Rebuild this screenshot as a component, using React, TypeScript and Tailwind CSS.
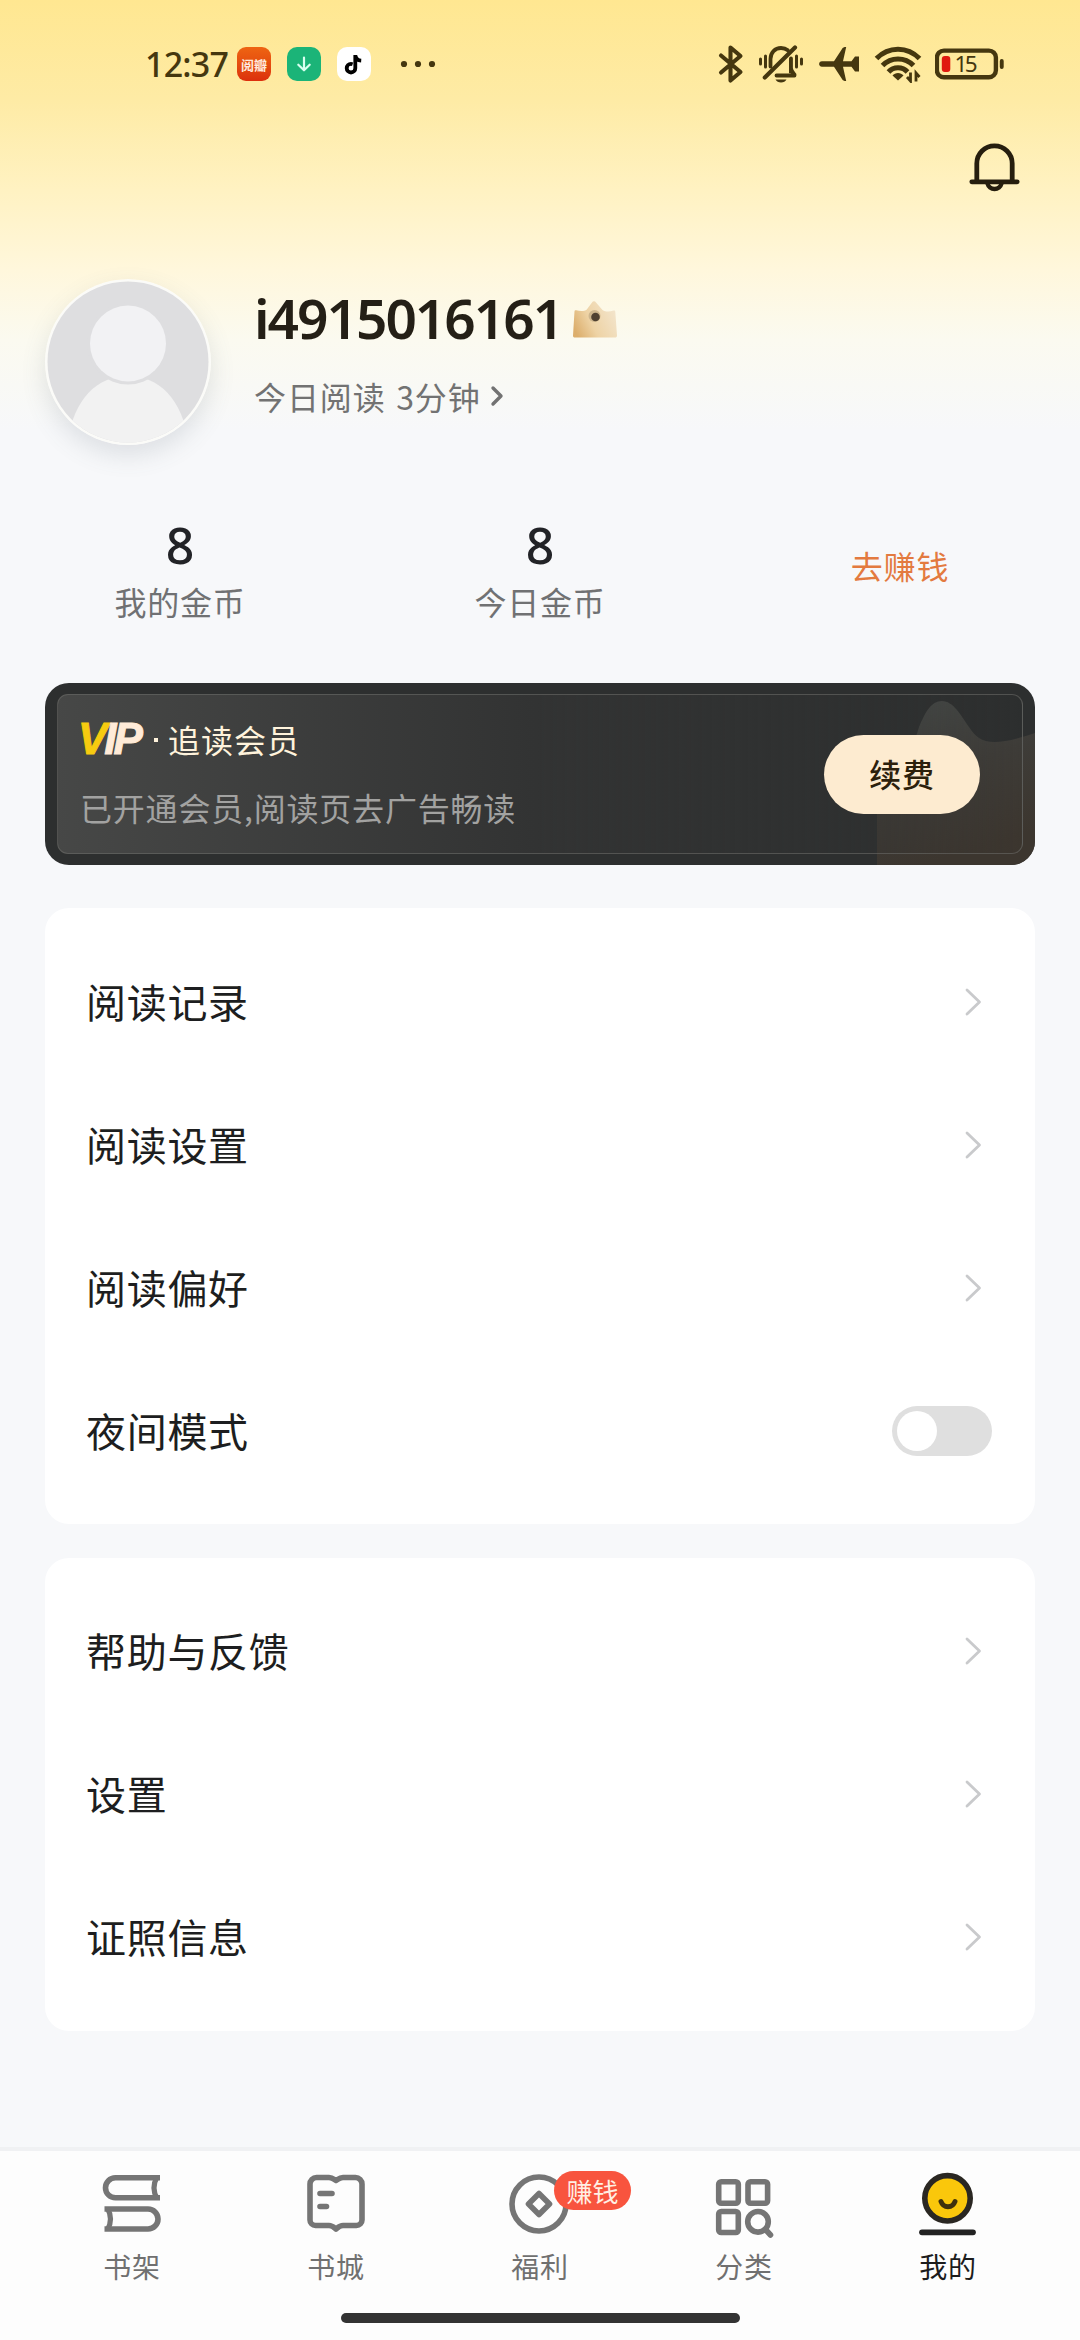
import type { ReactNode } from 'react'

const menuGroups = [
  {
    className: 'mt-[43px] h-[616px] pt-[22px]',
    items: [
      { label: '阅读记录' },
      { label: '阅读设置' },
      { label: '阅读偏好' },
      { label: '夜间模式', toggle: true },
    ],
  },
  {
    className: 'mt-[34px] h-[473px] pt-[21px]',
    items: [{ label: '帮助与反馈' }, { label: '设置' }, { label: '证照信息' }],
  },
]

function StatusBar() {
  return (
    <div className="flex h-[128px] items-center pl-[145px] pr-[75px] text-[#45370f]">
      <span className="w-[92px] whitespace-nowrap font-['Noto_Sans'] text-[34px] font-medium tracking-[-0.8px]">
        12:37
      </span>
      {/* Notification icons */}
      <div className="flex items-center gap-4">
        <div className="flex size-[34px] items-center justify-center rounded-[9px] bg-linear-to-b from-[#ee6412] to-[#dc2f0c]">
          <span className="whitespace-nowrap text-[13px] font-bold leading-none text-[#ffe9dc]">阅瓣</span>
        </div>
        <div className="size-[34px] rounded-[10px] bg-[#1bb478]">
          <svg width="34" height="34" viewBox="0 0 34 34" fill="none" stroke="#d8fff0" strokeWidth="2.2" strokeLinecap="round" strokeLinejoin="round">
            <path d="M17 10.5V23M11.3 17.7L17 23.3l5.700-5.600" />
          </svg>
        </div>
        <div className="size-[34px] rounded-[10px] bg-white">
          <svg width="34" height="34" viewBox="0 0 34 34" fill="none" stroke="#000" strokeWidth="3.8">
            <path d="M18.300 8v13.200a4.300 4.300 0 1 1-4.300-4.300c.6 0 1 .1 1.600.3M18.300 8.200c.5 3.400 2.600 5.300 5.900 5.500" />
          </svg>
        </div>
      </div>
      <svg className="ml-[28px]" width="40" height="8" viewBox="0 0 40 8" fill="currentColor">
        <circle cx="5" cy="4" r="3.1" />
        <circle cx="19" cy="4" r="3.1" />
        <circle cx="33" cy="4" r="3.1" />
      </svg>

      {/* System icons */}
      <div className="ml-auto flex items-center">
        <svg width="26" height="40" viewBox="0 0 26 40" fill="none" stroke="currentColor" strokeWidth="4.1" strokeLinecap="round" strokeLinejoin="round">
          <path d="M3 11.500L22.500 28 12.500 36.500V3.500L22.500 12 3 28.500" />
        </svg>
        <svg className="ml-[14px]" width="46" height="40" viewBox="0 0 46 40" fill="none" stroke="currentColor" strokeWidth="3.800" strokeLinecap="round" strokeLinejoin="round">
          <path d="M2.500 15v5M7.500 12v11M38.500 12v11M43.500 15v5" strokeWidth="3" />
          <path d="M12.500 22.500V15c0-6.500 4.500-11 10.500-11 2.700 0 5 .8 6.800 2.300" />
          <path d="M6.800 33.500L37 3.500" strokeWidth="4.200" />
          <path d="M33 14.500v9.500c0 2.500 1 4 3.500 6.500v1H18.500" />
          <path d="M31.500 15v14h5l-3-4z" fill="currentColor" strokeWidth="1" />
          <path d="M17.500 35.500h11c-1 2-3 3-5.500 3s-4.500-1-5.500-3z" fill="currentColor" stroke="none" />
        </svg>
        <svg className="ml-[14px]" width="42" height="38" viewBox="0 0 42 38" fill="currentColor">
          <path d="M4 16.300h12L24 4c.8-1.500 1.900-2 4.200-2L25 16.300h8.500l3.500-4.800h4v15h-4l-3.500-4.800H25L28.200 36c-2.300 0-3.400-.5-4.200-2L16 21.700H4c-3.800 0-3.800-5.400 0-5.400z" />
        </svg>
        <svg className="ml-[14px]" width="48" height="38" viewBox="0 0 48 38" fill="none" stroke="currentColor" strokeWidth="5" strokeLinecap="butt">
          <path d="M2.500 13.500C14.500 1 33.500 1 45.500 13.500" />
          <path d="M8.500 20.500c8.500-8.800 22.500-8.800 31 0" />
          <path d="M14.500 27c5-5.600 14-5.600 19 0" />
          <path d="M18.500 30.500c2.500-3.500 8.500-3.500 11 0l-5.500 5z" fill="currentColor" stroke="none" />
          <path d="M36.500 27.500v8.500l-3.500-4M42 36.500V28l3.500 4" strokeWidth="2.800" />
        </svg>
        <svg className="ml-[13px]" width="70" height="32" viewBox="0 0 70 32" fill="none">
          <rect x="1.900" y="2.600" width="59" height="26.700" rx="7" stroke="currentColor" strokeWidth="4.400" />
          <rect x="6.800" y="8" width="8.500" height="16" rx="3" fill="#e01a10" />
          <text x="19.500" y="23.800" fill="#45370f" fontSize="22.500" fontFamily="Noto Sans" textLength="23">15</text>
          <rect x="64.800" y="11" width="3.900" height="10" rx="1.900" fill="currentColor" />
        </svg>
      </div>
    </div>
  )
}

function Avatar() {
  return (
    <svg className="rounded-full shadow-[0_10px_24px_rgba(90,100,110,0.16)]" width="166" height="166" viewBox="0 0 166 166">
      <defs>
        <clipPath id="avatar">
          <circle cx="83" cy="83" r="80.500" />
        </clipPath>
      </defs>
      <circle cx="83" cy="83" r="83" fill="#fbfbf8" />
      <circle cx="83" cy="83" r="80.500" fill="#dedee0" />
      <g clipPath="url(#avatar)">
        <path d="M22 166C28 120 52 97 83 97s55 23 61 69z" fill="#f2f2f2" />
        <circle cx="83" cy="64.500" r="41" fill="#dedee0" />
      </g>
      <circle cx="83" cy="64.500" r="38" fill="#f2f2f4" />
    </svg>
  )
}

function CrownBadge() {
  return (
    <svg width="46" height="40" viewBox="0 0 46 40">
      <defs>
        <linearGradient id="crown" x1="0" y1="0.700" x2="1" y2="0.300">
          <stop offset="0" stopColor="#dcae6c" />
          <stop offset="0.400" stopColor="#eed3a5" />
          <stop offset="1" stopColor="#f3e5cd" />
        </linearGradient>
      </defs>
      <path d="M2.500 11.500c0-1 .8-1.500 1.800-1.200 4 1.200 8.500 1 10.500-.8L20 2.500c1-1.700 3-1.700 4 0l6.500 7.500c3 2 7 2 11 .5 1-.3 1.800.2 1.800 1.200L45 35.500c0 1.500-.7 2-2 2H3c-1.500 0-2-.5-2-2z" fill="url(#crown)" />
      <circle cx="22.500" cy="16" r="6" fill="#cdb58d" />
      <circle cx="23.500" cy="17" r="4.300" fill="#4e4031" />
    </svg>
  )
}

function Stat({ value, label }: { value: string; label: string }) {
  return (
    <div className="flex flex-col items-center">
      <span className="h-[58px] font-['Noto_Sans'] text-[50px] font-medium leading-[60px] text-[#222327]">{value}</span>
      <span className="mt-[8px] text-[32px] leading-[40px] tracking-[0.8px] text-[#707173]">{label}</span>
    </div>
  )
}

function VipCard() {
  return (
    <section className="relative mx-[45px] mt-[61px] h-[182px] overflow-hidden rounded-[24px] bg-[#2d2f2f] px-3 py-[11px]">
      <svg className="absolute right-0 top-0" width="200" height="182" viewBox="0 0 200 182">
        <defs>
          <linearGradient id="vipShade" x1="0" y1="0" x2="0.300" y2="1">
            <stop offset="0" stopColor="#464a48" />
            <stop offset="0.500" stopColor="#3e3c38" />
            <stop offset="1" stopColor="#3c362f" />
          </linearGradient>
        </defs>
        <path d="M42 182V110c0-20 34-32 42-66 6-14 12-26 23-26s19 14 27 26c10 16 22 21 66 6v132z" fill="url(#vipShade)" />
      </svg>
      <div className="relative flex h-full items-center justify-between rounded-[11px] border border-[#6a6a67]/60 bg-linear-to-r from-[#4a4b4a]/90 via-[#333434]/90 via-50% to-transparent pl-[20px] pr-[42px]">
        <div className="-mt-[3px]">
          <div className="flex h-[40px] items-center text-[32px] tracking-[1px] text-[#fff3dc]">
            <span className="w-[76px] whitespace-nowrap font-['Liberation_Sans'] text-[44px] font-bold italic tracking-[-3px] text-[#ffebd8]">
              <span className="text-[#f6cb10] [-webkit-text-stroke:1px_#f6cb10]">V</span>
              <span className="[-webkit-text-stroke:1px_#ffebd8]">IP</span>
            </span>
            <span className="mr-[10px] mt-[3px] size-1 bg-[#fff3dc]" />
            <span>追读会员</span>
          </div>
          <div className="mt-[28px] whitespace-nowrap pl-[2px] text-[32px] leading-[40px] tracking-[0.8px] text-[#a2a2a1]">已开通会员,阅读页去广告畅读</div>
        </div>
        <button className="h-[79px] w-[156px] rounded-full bg-[#fdebd0] pb-[3px] text-[32px] font-medium tracking-[0.8px] text-[#2c200c]">
          续费
        </button>
      </div>
    </section>
  )
}

function MenuRow({ label, toggle }: { label: string; toggle?: boolean }) {
  return (
    <div className="flex h-[143px] items-center justify-between pl-[41px] pr-[43px]">
      <span className="-mt-[2px] text-[40px] tracking-[0.7px] text-[#1d1e20]">{label}</span>
      {toggle ? (
        <div className="flex h-[50px] w-[100px] items-center rounded-full bg-[#dfdfdf] pl-[5px]">
          <div className="size-[40px] rounded-full bg-white" />
        </div>
      ) : (
        <svg className="mr-[10px]" width="18" height="28" viewBox="0 0 18 28" fill="none" stroke="#c9cacc" strokeWidth="2.800" strokeLinecap="round" strokeLinejoin="round">
          <path d="M3 2l12.500 12L3 26" />
        </svg>
      )}
    </div>
  )
}

function TabItem({ label, active, badge, children }: { label: string; active?: boolean; badge?: string; children: ReactNode }) {
  return (
    <div className="relative flex w-[204px] flex-col items-center pt-[20px]">
      <svg width="64" height="68" viewBox="0 0 64 68" fill="none" stroke="#757575" strokeWidth="5.600" strokeLinejoin="round" strokeLinecap="round">
        {children}
      </svg>
      <span className={`mt-[7px] text-[28px] leading-[40px] tracking-[0.8px] ${active ? 'text-[#1c1c1c]' : 'text-[#707070]'}`}>
        {label}
      </span>
      {badge && (
        <span className="absolute left-[116px] top-[20px] flex h-[39px] w-[77px] items-center justify-center rounded-full bg-[#f8543e] text-[26px] leading-none text-[#fff0e4]">
          {badge}
        </span>
      )}
    </div>
  )
}

function TabBar() {
  return (
    <nav className="mt-auto h-[193px] border-t-4 border-[#f0f1f3] bg-[#fdfdfd]">
      <div className="flex h-[162px] pl-[30px]">
        <TabItem label="书架">
          <path d="M60 6.800H15.500a10 10 0 0 0 0 20H60M4.500 38H48a10 10 0 0 1 0 20H4.500" strokeLinecap="butt" />
          <path d="M57 6Q51 16.800 57 27.600M7.500 37.200Q13.500 48 7.500 58.800" strokeWidth="5.200" strokeLinecap="butt" />
        </TabItem>
        <TabItem label="书城">
          <path d="M32 9.500c-3-2-4-3-7-3H12.500a6.500 6.500 0 0 0-6.500 6.500v36a5.500 5.500 0 0 0 5.500 5.500H25c3 0 4 1 7 3.500 3-2.500 4-3.500 7-3.500h13.500a5.500 5.500 0 0 0 5.500-5.500V13a6.500 6.500 0 0 0-6.500-6.500H39c-3 0-4 1-7 3z" />
          <path d="M16 22.500h12M16 35.500h6.500" />
        </TabItem>
        <TabItem label="福利" badge="赚钱">
          <circle cx="31" cy="33" r="27" />
          <path d="M31 22.500l10.500 10.500-10.500 10.500-10.500-10.500z" />
        </TabItem>
        <TabItem label="分类">
          <rect x="6.700" y="10.700" width="19.600" height="21.500" rx="2.500" />
          <rect x="36" y="10.700" width="19.600" height="21.500" rx="2.500" />
          <rect x="6.700" y="40.500" width="19.600" height="21" rx="2.500" />
          <circle cx="46" cy="50.800" r="10.300" />
          <path d="M53.500 58.500l5 5.500" />
        </TabItem>
        <TabItem label="我的" active>
          <circle cx="31.500" cy="27.300" r="22.700" fill="#fac70b" stroke="#2a2722" />
          <path d="M25 30.500c2.500 7 11.500 7 14 0" stroke="#3f300c" strokeWidth="5" />
          <path d="M6 61.300h51" stroke="#222" strokeWidth="5.700" />
        </TabItem>
      </div>
      <div className="mx-auto h-[10px] w-[399px] rounded-full bg-[#333]" />
    </nav>
  )
}

export default function App() {
  return (
    <div className="flex h-[2340px] w-[1080px] flex-col overflow-hidden bg-[#f7f8fa] bg-[linear-gradient(180deg,#ffe791_0px,#feeba5_100px,#fff2c2_190px,#fff7dc_270px,#fbfaf0_340px,#f7f8fa_430px)] font-['Noto_Sans_CJK_SC',sans-serif]">
      <StatusBar />

      <div className="flex h-[82px] justify-end pr-[58px] pt-[12px]">
        <svg width="56" height="56" viewBox="0 0 56 56" fill="none" stroke="#261e0e" strokeWidth="4.800" strokeLinecap="round">
          <path d="M10.800 41.500V23.500a17.700 17.700 0 0 1 35.400 0v18M5.800 41.800h45.400" />
          <path d="M21.500 43.500a7.200 7.200 0 0 0 14 0" strokeWidth="4.400" />
        </svg>
      </div>

      {/* Profile */}
      <div className="flex h-[300px] pl-[45px] pt-[69px]">
        <Avatar />
        <div className="ml-[43px] pt-[10px]">
          <div className="flex h-[62px] items-center">
            <span className="-mt-[4px] w-[318px] whitespace-nowrap font-['Noto_Sans'] text-[55px] font-semibold tracking-[-2px] text-[#241f16]">
              i4915016161
            </span>
            <CrownBadge />
          </div>
          <div className="mt-[25px] flex h-[40px] items-center text-[32px] tracking-[0.9px] text-[#727272]">
            <span className="[word-spacing:2.5px]">今日阅读 3分钟</span>
            <svg className="ml-[9px]" width="14" height="22" viewBox="0 0 14 22" fill="none" stroke="currentColor" strokeWidth="3.400" strokeLinecap="round" strokeLinejoin="round">
              <path d="M3 3l8 8-8 8" />
            </svg>
          </div>
        </div>
      </div>

      <div className="grid h-[112px] grid-cols-3 pt-[5px]">
        <Stat value="8" label="我的金币" />
        <Stat value="8" label="今日金币" />
        <div className="pt-[30px] text-center text-[32px] leading-[40px] tracking-[0.8px] text-[#e37a3f]">去赚钱</div>
      </div>

      <VipCard />

      {menuGroups.map((group, i) => (
        <section key={i} className={`mx-[45px] rounded-[24px] bg-white ${group.className}`}>
          {group.items.map((item) => (
            <MenuRow key={item.label} {...item} />
          ))}
        </section>
      ))}

      <TabBar />
    </div>
  )
}
